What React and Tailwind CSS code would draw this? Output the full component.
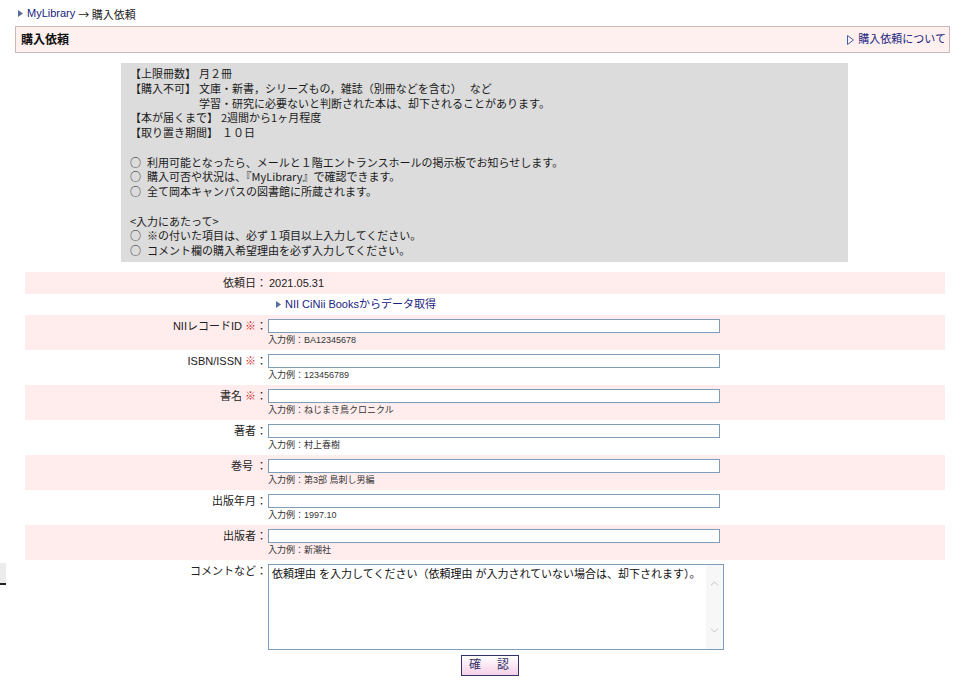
import React from 'react';
import { ChevronUp, ChevronDown } from 'lucide-react';

const cjk = { fontFamily: '"Noto Sans CJK JP", sans-serif' };

const fields = [
    { id: 'nii', label: 'NIIレコードID', req: true, hint: 'BA12345678', pink: true },
    { id: 'isbn', label: 'ISBN/ISSN', req: true, hint: '123456789', pink: false },
    { id: 'title', label: '書名', req: true, hint: 'ねじまき鳥クロニクル', pink: true },
    { id: 'author', label: '著者', req: false, hint: '村上春樹', pink: false },
    { id: 'vol', label: '巻号 ', req: false, hint: '第3部 鳥刺し男編', pink: true },
    { id: 'date', label: '出版年月', req: false, hint: '1997.10', pink: false },
    { id: 'pub', label: '出版者', req: false, hint: '新潮社', pink: true },
];

const Arrow = () => (
    <svg width="5" height="7" viewBox="0 0 5 7" className="inline-block mr-[4px]">
        <polygon points="0,0 5,3.5 0,7" fill="#5a6e9a" />
    </svg>
);

const Bullet = () => <span className="inline-block w-[17px]">○</span>;

const App = () => {
    return (
        <div
            className="relative w-[965px] min-h-[697px] bg-white text-[11px] text-[#222]"
            style={{ fontFamily: '"Liberation Sans", "Noto Sans CJK JP", sans-serif' }}
        >
            {/* breadcrumb */}
            <div className="h-[26px] pl-[18px] pt-[1px] flex items-center">
                <Arrow />
                <a className="text-[#1a237e]">MyLibrary</a>
                <span className="ml-[3px] leading-[14px]" style={cjk}>→ 購入依頼</span>
            </div>

            {/* title bar */}
            <div className="mx-[15px] h-[27px] border border-[#cdb8b8] bg-[#fff0f0] flex items-center justify-between pl-[5px] pr-[3px]">
                <h1 className="font-bold text-[12px] text-[#111]">購入依頼</h1>
                <a className="flex items-center text-[#1a237e]">
                    <svg width="7" height="10" viewBox="0 0 7 10" className="mr-[4px]">
                        <polygon points="0.5,0.5 6.5,5 0.5,9.5" fill="none" stroke="#3a5fb0" strokeWidth="1" />
                    </svg>
                    購入依頼について
                </a>
            </div>

            {/* notice */}
            <div
                className="ml-[121px] mt-[10px] w-[727px] bg-[#dcdcdc] pt-[3px] pb-[4px] pl-[9px] leading-[14.75px] text-[#1a1a1a]"
                style={cjk}
            >
                <div><span className="inline-block w-[69px]">【上限冊数】</span>月２冊</div>
                <div><span className="inline-block w-[69px]">【購入不可】</span>文庫・新書，シリーズもの，雑誌（別冊などを含む）　 など</div>
                <div className="pl-[69px]">学習・研究に必要ないと判断された本は、却下されることがあります。</div>
                <div><span className="inline-block w-[91px]">【本が届くまで】</span>2週間から1ヶ月程度</div>
                <div><span className="inline-block w-[92px]">【取り置き期間】</span>１０日</div>
                <div className="h-[14.75px]" />
                <div><Bullet />利用可能となったら、メールと１階エントランスホールの掲示板でお知らせします。</div>
                <div><Bullet />購入可否や状況は、『MyLibrary』で確認できます。</div>
                <div><Bullet />全て岡本キャンパスの図書館に所蔵されます。</div>
                <div className="h-[14.75px]" />
                <div>&lt;入力にあたって&gt;</div>
                <div><Bullet />※の付いた項目は、必ず１項目以上入力してください。</div>
                <div><Bullet />コメント欄の購入希望理由を必ず入力してください。</div>
            </div>

            {/* form */}
            <div className="ml-[25px] mt-[10px] w-[920px]">
                <div className="grid grid-cols-[242px_1fr] h-[22px] bg-[#ffeded] items-center">
                    <div className="text-right">依頼日：</div>
                    <div className="pl-[2px]">2021.05.31</div>
                </div>
                <div className="grid grid-cols-[242px_1fr] h-[21px] items-center">
                    <div />
                    <a className="pl-[9px] flex items-center text-[#1a237e]"><Arrow />NII CiNii Booksからデータ取得</a>
                </div>
                {fields.map((f) => (
                    <div key={f.id} className={`grid grid-cols-[242px_1fr] h-[35px] ${f.pink ? 'bg-[#ffeded]' : ''}`}>
                        <div className="text-right pt-[4px] leading-[14px]">
                            {f.label}
                            {f.req && <span className="text-[#d03030]"> ※</span>}
                            ：
                        </div>
                        <div className="pl-[1px] pt-[4px]">
                            <input className="block w-[452px] h-[14px] border border-[#7f9db9] bg-white outline-none" />
                            <div className="text-[9px] leading-[12px] text-[#333] mt-[1px]">入力例：{f.hint}</div>
                        </div>
                    </div>
                ))}
                <div className="grid grid-cols-[242px_1fr] h-[92px]">
                    <div className="text-right pt-[4px] leading-[14px]">コメントなど：</div>
                    <div className="pl-[1px] pt-[4px]">
                        <div className="flex w-[456px] h-[86px] border border-[#7f9db9] bg-white">
                            <textarea
                                className="flex-1 resize-none outline-none px-[3px] py-[2px] text-[11px] leading-[14px] text-[#111]"
                                defaultValue="依頼理由 を入力してください（依頼理由 が入力されていない場合は、却下されます）。"
                            />
                            <div className="w-[17px] bg-[#f7f7f7] flex flex-col items-center justify-between py-[12px] text-[#b8b8b8]">
                                <ChevronUp size={13} strokeWidth={1.5} />
                                <ChevronDown size={13} strokeWidth={1.5} />
                            </div>
                        </div>
                    </div>
                </div>
                <div className="flex justify-center pl-[10px] mt-[3px]">
                    <button className="w-[58px] h-[21px] border border-[#333366] bg-gradient-to-b from-white to-[#f6cfe9] text-[#333366] text-[12px] tracking-[2px]">
                        確　認
                    </button>
                </div>
            </div>

            {/* stray scrollbar fragment on the left edge */}
            <div className="absolute left-0 top-[563px] w-[6px] h-[22px] bg-[#ececec] border-b-2 border-[#222]" />
        </div>
    );
};

export default App;
